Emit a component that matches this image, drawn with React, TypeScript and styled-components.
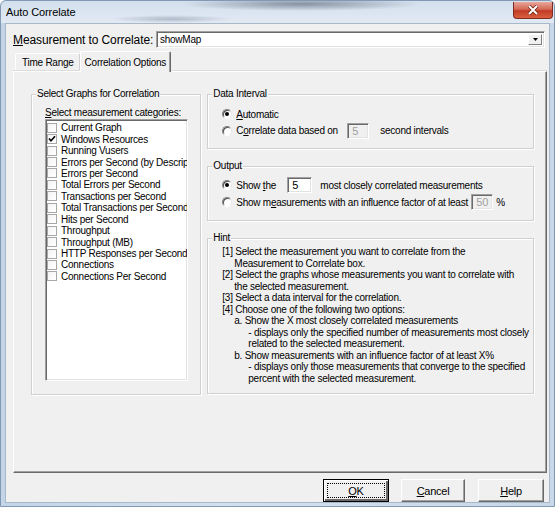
import React from "react";
import styled, { createGlobalStyle, css } from "styled-components";

const GlobalStyle = createGlobalStyle`
  html, body {
    margin: 0;
    padding: 0;
    background: #ffffff;
  }
  body {
    font-family: "Liberation Sans", Arial, sans-serif;
    font-size: 10px;
    letter-spacing: -0.25px;
    color: #000;
  }
  u {
    text-decoration-thickness: 1px;
    text-underline-offset: 1px;
  }
`;

const sunken = css`
  box-sizing: border-box;
  border-style: solid;
  border-width: 1px;
  border-color: #a0a0a0 #ffffff #ffffff #a0a0a0;
  box-shadow: inset 1px 1px 0 #696969, inset -1px -1px 0 #e3e3e3;
`;

const Window = styled.div`
  width: 555px;
  height: 507px;
  box-sizing: border-box;
  display: flex;
  flex-direction: column;
  background: linear-gradient(90deg, #c4d5e8, #d3e0ee 40%, #c9d8e9);
  border: 1px solid #8199b2;
  border-radius: 6px 6px 0 0;
`;

const TitleBar = styled.div`
  height: 22px;
  display: flex;
  align-items: center;
  padding-left: 5px;
  background:
    radial-gradient(ellipse 120px 7px at 300px 3px, rgba(70, 80, 100, 0.55), transparent),
    radial-gradient(ellipse 60px 4px at 170px 18px, rgba(90, 100, 120, 0.35), transparent),
    linear-gradient(#d3e0ee, #e1e9f3);
  border-radius: 6px 6px 0 0;
`;

const TitleText = styled.span`
  font-size: 11px;
  letter-spacing: -0.1px;
  color: #000;
`;

const CloseButton = styled.span`
  margin-left: auto;
  margin-top: -4px;
  margin-right: 1px;
  width: 40px;
  height: 17px;
  box-sizing: border-box;
  display: flex;
  align-items: center;
  justify-content: center;
  border: 1px solid #7e2c22;
  border-top: none;
  border-radius: 0 0 4px 4px;
  background: linear-gradient(#e8a79a, #d46a55 45%, #c23b26 55%, #d9603f);
`;

const Client = styled.div`
  flex: 1;
  margin: 0 4px 3px 4px;
  display: flex;
  flex-direction: column;
  padding: 7px 4px 0 7px;
  background: #f0f0f0;
  border: 1px solid #a8b8c9;
`;

const MeasureRow = styled.div`
  display: flex;
  align-items: center;
  height: 17px;
`;

const BigLabel = styled.span`
  font-size: 12px;
  letter-spacing: -0.1px;
  width: 143px;
`;

const Combo = styled.div`
  ${sunken};
  flex: 1;
  height: 17px;
  background: #fff;
  display: flex;
  align-items: center;
  padding: 0 2px 0 3px;
`;

const ComboText = styled.span`
  flex: 1;
`;

const ComboArrow = styled.span`
  width: 14px;
  height: 11px;
  box-sizing: border-box;
  display: flex;
  align-items: center;
  justify-content: center;
  background: #f0f0f0;
  border: 1px solid;
  border-color: #fff #808080 #808080 #fff;
`;

const TabStrip = styled.div`
  margin-top: 3px;
  height: 20px;
  display: flex;
  align-items: flex-end;
  padding-left: 2px;
`;

const Tab = styled.div<{ $active?: boolean }>`
  box-sizing: border-box;
  height: ${(p) => (p.$active ? "21px" : "18px")};
  display: flex;
  align-items: center;
  padding: ${(p) => (p.$active ? "0 4px" : "0 5px 0 6px")};
  background: #f0f0f0;
  border-top: 1px solid #ffffff;
  border-left: 1px solid #ffffff;
  border-right: 1px solid ${(p) => (p.$active ? "#696969" : "#d0d0d0")};
  border-radius: 2px 2px 0 0;
  ${(p) =>
    p.$active &&
    css`
      margin-bottom: -1px;
      position: relative;
      z-index: 1;
      box-shadow: inset -1px 0 0 #a0a0a0;
    `}
`;

const TabPanel = styled.div`
  box-sizing: border-box;
  height: 402px;
  margin-right: -2px;
  border: 1px solid;
  border-color: #ffffff #696969 #696969 #ffffff;
  box-shadow: inset -1px -1px 0 #a0a0a0, 0 -1px 0 #dcdcdc;
  padding: 16px 12px 0 17px;
  display: flex;
  gap: 6px;
`;

const Group = styled.fieldset<{ $h: number; $w?: number }>`
  box-sizing: border-box;
  margin: 0;
  padding: 0;
  min-width: 0;
  height: ${(p) => p.$h}px;
  width: ${(p) => (p.$w ? `${p.$w}px` : "auto")};
  border: 1px solid #d0d0d0;
  box-shadow: inset 1px 1px 0 #fff, 1px 1px 0 #fff;
`;

const Legend = styled.legend`
  margin-left: 4px;
  padding: 0 1px;
  line-height: 12px;
  background: #f0f0f0;
`;

const GroupBody = styled.div<{ $pad: string }>`
  padding: ${(p) => p.$pad};
`;

const RightColumn = styled.div`
  width: 328px;
  display: flex;
  flex-direction: column;
  gap: 11px;
`;

const SmallLabel = styled.div`
  line-height: 12px;
`;

const ListBox = styled.div`
  ${sunken};
  width: 143px;
  height: 262px;
  background: #fff;
  padding: 2px 0 0 1px;
  overflow: hidden;
`;

const ListItem = styled.div`
  display: flex;
  align-items: center;
  height: 11.45px;
  white-space: nowrap;
`;

const Check = styled.span`
  flex: none;
  width: 10px;
  height: 10px;
  box-sizing: border-box;
  margin-right: 4px;
  border: 1px solid #a7a7a7;
  background: linear-gradient(135deg, #f4f4f4, #ffffff);
  display: flex;
  align-items: center;
  justify-content: center;
`;

const Row = styled.div<{ $h: number; $gap?: number }>`
  display: flex;
  align-items: center;
  height: ${(p) => p.$h}px;
  margin-top: ${(p) => p.$gap ?? 0}px;
  white-space: nowrap;
`;

const Radio = styled.span<{ $on?: boolean }>`
  flex: none;
  width: 10px;
  height: 10px;
  box-sizing: border-box;
  margin-right: 4px;
  border-radius: 50%;
  border: 1px solid;
  border-color: #808080 #e6e6e6 #ffffff #808080;
  background: #fff;
  box-shadow: inset 1px 1px 0 #505050;
  display: flex;
  align-items: center;
  justify-content: center;
  &::after {
    content: "";
    width: 4px;
    height: 4px;
    border-radius: 50%;
    background: ${(p) => (p.$on ? "#000" : "transparent")};
  }
`;

const FixedLabel = styled.span<{ $w: number }>`
  width: ${(p) => p.$w}px;
`;

const NumBox = styled.span<{ $w: number; $disabled?: boolean }>`
  ${sunken};
  width: ${(p) => p.$w}px;
  height: 16px;
  display: flex;
  align-items: center;
  padding-left: 4px;
  background: ${(p) => (p.$disabled ? "#f0f0f0" : "#fff")};
  color: ${(p) => (p.$disabled ? "#a0a0a0" : "#000")};
  font-size: 11px;
`;

const After = styled.span<{ $ml: number }>`
  margin-left: ${(p) => p.$ml}px;
`;

const HintLine = styled.div<{ $indent: number }>`
  line-height: 11.55px;
  padding-left: ${(p) => p.$indent}px;
  white-space: nowrap;
`;

const ButtonRow = styled.div`
  margin-top: 6px;
  height: 23px;
  display: flex;
  justify-content: flex-end;
  padding-right: 1px;
`;

const Button = styled.div<{ $w: number; $ml: number; $default?: boolean }>`
  box-sizing: border-box;
  width: ${(p) => p.$w}px;
  height: 23px;
  margin-left: ${(p) => p.$ml}px;
  display: flex;
  align-items: center;
  justify-content: center;
  background: #f0f0f0;
  font-size: 11px;
  border: 1px solid;
  border-color: #ffffff #696969 #696969 #ffffff;
  box-shadow: inset -1px -1px 0 #a0a0a0;
  ${(p) =>
    p.$default &&
    css`
      border: 1px solid #000;
      box-shadow: inset 1px 1px 0 #fff, inset -2px -2px 0 #696969;
      outline: 1px dotted #000;
      outline-offset: -5px;
    `}
`;

const categories = [
  "Current Graph",
  "Windows Resources",
  "Running Vusers",
  "Errors per Second (by Description)",
  "Errors per Second",
  "Total Errors per Second",
  "Transactions per Second",
  "Total Transactions per Second",
  "Hits per Second",
  "Throughput",
  "Throughput (MB)",
  "HTTP Responses per Second",
  "Connections",
  "Connections Per Second",
];

const hints: [number, string][] = [
  [0, "[1] Select the measurement you want to correlate from the"],
  [12, "Measurement to Correlate box."],
  [0, "[2] Select the graphs whose measurements you want to correlate with"],
  [12, "the selected measurement."],
  [0, "[3] Select a data interval for the correlation."],
  [0, "[4] Choose one of the following two options:"],
  [12, "a. Show the X most closely correlated measurements"],
  [26, "- displays only the specified number of measurements most closely"],
  [26, "related to the selected measurement."],
  [12, "b. Show measurements with an influence factor of at least X%"],
  [26, "- displays only those measurements that converge to the specified"],
  [26, "percent with the selected measurement."],
];

export default function App() {
  return (
    <>
      <GlobalStyle />
      <Window>
        <TitleBar>
          <TitleText>Auto Correlate</TitleText>
          <CloseButton>
            <svg width="12" height="10" viewBox="0 0 12 10">
              <path d="M2 1 L10 9 M10 1 L2 9" stroke="#6b1d12" strokeWidth="3.4" />
              <path d="M2 1 L10 9 M10 1 L2 9" stroke="#fff" strokeWidth="2" />
            </svg>
          </CloseButton>
        </TitleBar>
        <Client>
          <MeasureRow>
            <BigLabel>
              <u>M</u>easurement to Correlate:
            </BigLabel>
            <Combo>
              <ComboText>showMap</ComboText>
              <ComboArrow>
                <svg width="5" height="3" viewBox="0 0 5 3">
                  <path d="M0 0 H5 L2.5 3 Z" fill="#000" />
                </svg>
              </ComboArrow>
            </Combo>
          </MeasureRow>

          <TabStrip>
            <Tab>Time Range</Tab>
            <Tab $active>Correlation Options</Tab>
          </TabStrip>

          <TabPanel>
            <Group $h={307} $w={171}>
              <Legend>Select Graphs for Correlation</Legend>
              <GroupBody $pad="7px 0 0 13px">
                <SmallLabel>
                  <u>S</u>elect measurement categories:
                </SmallLabel>
                <ListBox>
                  {categories.map((c) => (
                    <ListItem key={c}>
                      <Check>
                        {c === "Windows Resources" && (
                          <svg width="8" height="8" viewBox="0 0 8 8">
                            <path d="M1 3.5 L3 5.8 L7 1.2" stroke="#000" strokeWidth="1.6" fill="none" />
                          </svg>
                        )}
                      </Check>
                      {c}
                    </ListItem>
                  ))}
                </ListBox>
              </GroupBody>
            </Group>

            <RightColumn>
              <Group $h={61}>
                <Legend>Data Interval</Legend>
                <GroupBody $pad="6px 0 0 14px">
                  <Row $h={16}>
                    <Radio $on />
                    <span>
                      <u>A</u>utomatic
                    </span>
                  </Row>
                  <Row $h={17}>
                    <Radio />
                    <FixedLabel $w={111}>
                      C<u>o</u>rrelate data based on
                    </FixedLabel>
                    <NumBox $w={22} $disabled>
                      5
                    </NumBox>
                    <After $ml={11}>second intervals</After>
                  </Row>
                </GroupBody>
              </Group>

              <Group $h={61}>
                <Legend>Output</Legend>
                <GroupBody $pad="5px 0 0 14px">
                  <Row $h={16}>
                    <Radio $on />
                    <FixedLabel $w={51}>
                      Show <u>t</u>he
                    </FixedLabel>
                    <NumBox $w={25}>5</NumBox>
                    <After $ml={8}>most closely correlated measurements</After>
                  </Row>
                  <Row $h={16} $gap={1}>
                    <Radio />
                    <FixedLabel $w={235}>
                      Show m<u>e</u>asurements with an influence factor of at least
                    </FixedLabel>
                    <NumBox $w={22} $disabled>
                      50
                    </NumBox>
                    <After $ml={3}>%</After>
                  </Row>
                </GroupBody>
              </Group>

              <Group $h={162}>
                <Legend>Hint</Legend>
                <GroupBody $pad="2px 0 0 14px">
                  {hints.map(([indent, text]) => (
                    <HintLine key={text} $indent={indent}>
                      {text}
                    </HintLine>
                  ))}
                </GroupBody>
              </Group>
            </RightColumn>
          </TabPanel>

          <ButtonRow>
            <Button $w={66} $ml={0} $default>
              <u>O</u>K
            </Button>
            <Button $w={64} $ml={12}>
              <u>C</u>ancel
            </Button>
            <Button $w={66} $ml={13}>
              <u>H</u>elp
            </Button>
          </ButtonRow>
        </Client>
      </Window>
    </>
  );
}
